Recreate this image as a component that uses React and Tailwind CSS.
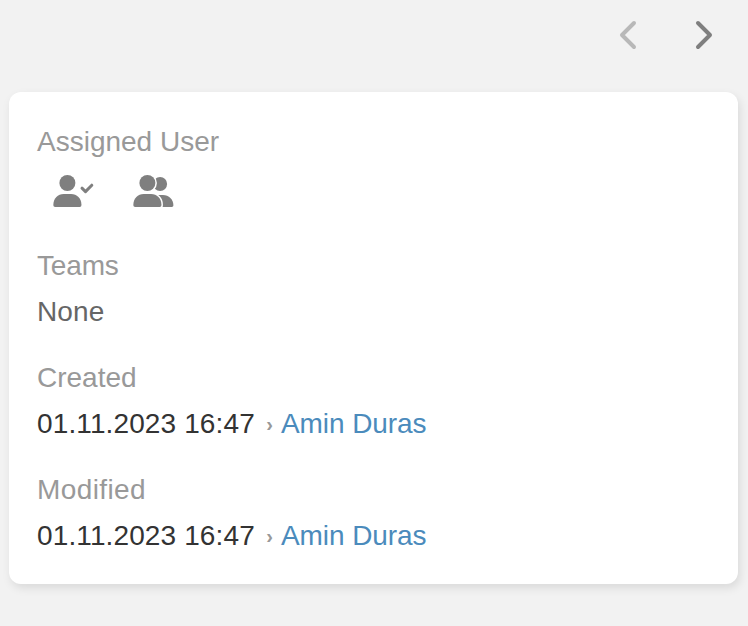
function Chevron({ d, className }) {
  return (
    <svg viewBox="0 0 20 32" className={`h-8 w-5 ${className}`} fill="none" stroke="currentColor" strokeWidth="4" strokeLinecap="round" strokeLinejoin="round" aria-hidden="true">
      <path d={d} />
    </svg>
  );
}

function UserCheckIcon() {
  return (
    <svg viewBox="-0.4 0 41 32" className="h-8 w-[41px]" fill="currentColor" aria-hidden="true">
      <circle cx="14" cy="8" r="8" />
      <path d="M10.3 19h7.4c5.8 0 10.3 4.5 10.3 10.300v1c0 1-.7 1.700-1.700 1.700H1.700C.7 32 0 31.300 0 30.300v-1C0 23.500 4.500 19 10.300 19z" />
      <path d="m28.600 13.200 3.500 3.400 6.300-6.400" fill="none" stroke="currentColor" strokeWidth="3" strokeLinecap="round" strokeLinejoin="round" />
    </svg>
  );
}

function UsersIcon() {
  return (
    <svg viewBox="-0.4 0 41 32" className="h-8 w-[41px]" fill="currentColor" aria-hidden="true">
      <circle cx="26.700" cy="9" r="7" />
      <path d="M24 20h5.500C35.500 20 40 24.500 40 30.300c0 1-.7 1.700-1.600 1.700H24z" />
      <g stroke="white" strokeWidth="3" paintOrder="stroke">
        <circle cx="14" cy="8" r="8" />
        <path d="M10.3 19h7.4c5.8 0 10.3 4.5 10.3 10.300v1c0 1-.7 1.700-1.700 1.700H1.700C.7 32 0 31.300 0 30.300v-1C0 23.500 4.500 19 10.300 19z" />
      </g>
    </svg>
  );
}

function Field({ label, labelClass = "", children }) {
  return (
    <div className="flex flex-col">
      <div className={`h-10 leading-10 text-[#999] ${labelClass}`}>{label}</div>
      {children}
    </div>
  );
}

function Stamp() {
  return (
    <div className="mt-1.5 flex h-10 items-center whitespace-pre leading-10 text-[#333]">
      <span className="w-[219px] tracking-[0.12px]">01.11.2023 16:47</span>
      <span className="flex w-[25px] justify-center pl-0.5 text-xl font-bold text-[#999]">›</span>
      <a className="tracking-[-0.08px] text-[#4b8bbc]">Amin Duras</a>
    </div>
  );
}

export default function App() {
  return (
    <main className="h-[626px] w-[748px] overflow-hidden bg-[#f2f2f2] pl-[9px] pr-[10px] font-['Liberation_Sans',sans-serif] text-[28px]">
      <nav className="flex h-[92px] justify-end gap-14 pr-6 pt-[19px] text-[#7f7f7f]">
        <button aria-label="Previous" className="h-8 w-5"><Chevron className="text-[#b8b8b8]" d="M16 4 4 16 16 28" /></button>
        <button aria-label="Next" className="h-8 w-5"><Chevron className="" d="M4 4 16 16 4 28" /></button>
      </nav>
      <section className="flex h-[492px] flex-col gap-[26px] rounded-xl bg-white px-7 pt-[30px] shadow-[2px_4px_10px_rgba(0,0,0,0.10)]">
        <Field label="Assigned User">
          <div className="mt-[13px] flex h-[45px] gap-[39px] pl-4 text-[#7f7f7f]">
            <UserCheckIcon />
            <UsersIcon />
          </div>
        </Field>
        <Field label="Teams" labelClass="tracking-[-0.15px]">
          <div className="mt-1.5 h-10 leading-10 tracking-[0.15px] text-[#666]">None</div>
        </Field>
        <Field label="Created"><Stamp /></Field>
        <Field label="Modified" labelClass="tracking-[0.4px]"><Stamp /></Field>
      </section>
    </main>
  );
}
